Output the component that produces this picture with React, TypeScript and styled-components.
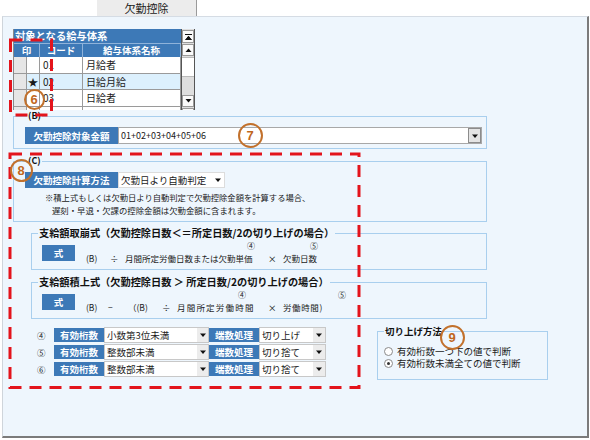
import styled, { createGlobalStyle, css } from 'styled-components'

const GlobalStyle = createGlobalStyle`
  html, body {
    margin: 0;
    padding: 0;
    background: #fff;
  }
  body {
    font-family: 'Noto Sans CJK JP', 'Noto Sans', sans-serif;
    color: #1a1a1a;
  }
`

const BLUE = '#3d79b7'
const LINE = '#a9cfee'

const Screen = styled.div`
  position: relative;
  width: 590px;
  height: 440px;
  overflow: hidden;
  background: #fff;
`

const TabBar = styled.div`
  display: flex;
  height: 16px;
  padding-left: 97px;
`

const Tab = styled.div`
  width: 100px;
  height: 16px;
  box-sizing: border-box;
  background: #ececec;
  border-right: 1px solid #9a9a9a;
  font-size: 11px;
  line-height: 16px;
  text-align: center;
`

const Panel = styled.div`
  margin-left: 2px;
  width: 587px;
  height: 422px;
  box-sizing: border-box;
  background: #eef6fd;
  border-top: 1px solid #d5dce4;
  border-left: 1px solid #cfd5db;
  border-right: 2px solid #7b7b7b;
  border-bottom: 2px solid #7b7b7b;
  padding: 12px 0 0 10px;
`

/* ---- table ---- */

const TableWrap = styled.div`
  display: flex;
  width: 182px;
  height: 81px;
  overflow: hidden;
`

const Grid = styled.div`
  width: 168px;
  box-sizing: border-box;
  border-left: 1px solid #8a8a8a;
  background: #fff;
`

const TitleRow = styled.div`
  height: 14px;
  background: ${BLUE};
  color: #fff;
  font-size: 10.3px;
  font-weight: bold;
  line-height: 14px;
  padding-left: 1px;
`

const HeadRow = styled.div`
  display: grid;
  grid-template-columns: 26px 43px 1fr;
  height: 14px;
  background: ${BLUE};
  border-top: 1px solid #8fb3da;
  box-sizing: border-box;
`

const HeadCell = styled.div`
  border-right: 1px solid #8fb3da;
  color: #fff;
  font-size: 9.5px;
  font-weight: bold;
  line-height: 13px;
  text-align: center;
`

const DataRow = styled.div<{ $selected?: boolean }>`
  display: grid;
  grid-template-columns: 13px 13px 43px 1fr;
  height: 16.5px;
  box-sizing: border-box;
  border-bottom: 1px solid #9a9a9a;
  background: ${(p) => (p.$selected ? '#dcf0fd' : '#fff')};
`

const Cell = styled.div<{ $gray?: boolean; $center?: boolean }>`
  border-right: 1px solid #9a9a9a;
  font-size: 10px;
  line-height: 15px;
  padding-left: ${(p) => (p.$center ? 0 : 3)}px;
  text-align: ${(p) => (p.$center ? 'center' : 'left')};
  background: ${(p) => (p.$gray ? '#e6e6e6' : 'transparent')};
  overflow: hidden;
  white-space: nowrap;
`

const ScrollBar = styled.div`
  width: 14px;
  box-sizing: border-box;
  display: flex;
  flex-direction: column;
  gap: 1px;
  padding-top: 1px;
  background: #dedede;
  border-left: 1px solid #555;
  border-right: 1px solid #555;
`

const ScrollBtn = styled.div<{ $h: number }>`
  height: ${(p) => p.$h}px;
  flex: none;
  box-sizing: border-box;
  background: #fafafa;
  border: 1px solid #9a9a9a;
  display: flex;
  align-items: center;
  justify-content: center;
`

const ScrollThumb = styled.div`
  height: 18px;
  flex: none;
  background: #fff;
  border-top: 1px solid #bbb;
  border-bottom: 1px solid #bbb;
`

const ScrollTrack = styled.div`
  height: 16px;
  flex: none;
`

/* ---- group boxes ---- */

const Group = styled.fieldset`
  margin: 0;
  min-width: 0;
  box-sizing: border-box;
  border: 1px solid ${LINE};
`

const Legend = styled.legend<{ $size: number; $lh: number; $ml?: number }>`
  padding: 0 1px;
  margin-left: ${(p) => p.$ml ?? 0}px;
  font-size: ${(p) => p.$size}px;
  line-height: ${(p) => p.$lh}px;
  font-weight: bold;
  color: #111;
  white-space: nowrap;
`

const Section = styled(Group)<{ $gap: number }>`
  width: 474px;
  margin-top: ${(p) => p.$gap}px;
  padding: 5px 4px 4px 11px;
`

const FieldRow = styled.div<{ $h: number }>`
  display: flex;
  height: ${(p) => p.$h}px;
`

const Label = styled.div<{ $w: number }>`
  width: ${(p) => p.$w}px;
  flex: none;
  background: ${BLUE};
  color: #fff;
  font-size: 9.5px;
  font-weight: bold;
  display: flex;
  align-items: center;
  justify-content: center;
  white-space: nowrap;
`

const InputBox = styled.div<{ $w: number; $border: string }>`
  width: ${(p) => p.$w}px;
  flex: none;
  box-sizing: border-box;
  display: flex;
  align-items: center;
  background: #fff;
  border: 1px solid ${(p) => p.$border};
`

const InputText = styled.span<{ $size: number }>`
  flex: 1;
  padding-left: 2px;
  font-size: ${(p) => p.$size}px;
  white-space: nowrap;
  overflow: hidden;
`

const DropButton = styled.div`
  width: 13px;
  height: 15px;
  box-sizing: border-box;
  background: #e4e4e4;
  border: 1px solid #8c8c8c;
  display: flex;
  align-items: center;
  justify-content: center;
`

const ArrowCell = styled.div<{ $w: number; $bg: string }>`
  width: ${(p) => p.$w}px;
  align-self: stretch;
  flex: none;
  background: ${(p) => p.$bg};
  display: flex;
  align-items: center;
  justify-content: center;
`

const Note = styled.div<{ $indent: number; $size: number }>`
  margin-left: ${(p) => p.$indent}px;
  font-size: ${(p) => p.$size}px;
  line-height: 13px;
  white-space: nowrap;
`

const Notes = styled.div`
  margin-top: 3px;
`

/* ---- formula boxes ---- */

const FormulaBox = styled(Group)<{ $gap: number }>`
  width: 456px;
  margin: ${(p) => p.$gap}px 0 0 18px;
  padding: 5px 6px 5px 6px;
`

const FormulaRow = styled.div`
  display: flex;
  height: 19px;
`

const FormulaButton = styled.div`
  align-self: flex-start;
  width: 33px;
  height: 16px;
  margin: 0 11px 0 4px;
  background: ${BLUE};
  color: #fff;
  font-size: 9.5px;
  font-weight: bold;
  display: flex;
  align-items: center;
  justify-content: center;
`

const Term = styled.span<{ $w?: number; $ls?: number }>`
  position: relative;
  align-self: flex-end;
  flex: none;
  width: ${(p) => (p.$w ? `${p.$w}px` : 'auto')};
  font-size: 8.5px;
  line-height: 12px;
  letter-spacing: ${(p) => p.$ls ?? 0}px;
  white-space: nowrap;
`

const Mark = styled.span<{ $at: number }>`
  position: absolute;
  left: ${(p) => p.$at}px;
  bottom: 100%;
  margin-bottom: 2px;
  font-size: 8px;
  line-height: 8px;
  letter-spacing: 0;
`

/* ---- bottom area ---- */

const BottomArea = styled.div`
  display: flex;
  align-items: flex-start;
  margin: 8px 0 0 23px;
`

const OptionList = styled.div`
  display: flex;
  flex-direction: column;
  gap: 1px;
`

const OptionRow = styled.div`
  display: flex;
  align-items: center;
  height: 16px;
`

const RowMark = styled.span`
  width: 17px;
  flex: none;
  padding-left: 1px;
  font-size: 8.5px;
  line-height: 16px;
`

const MethodBox = styled(Group)`
  width: 171px;
  margin: -2px 0 0 51px;
  padding: 7px 6px 10px 6px;
`

const RadioLine = styled.div`
  display: flex;
  align-items: center;
  gap: 4px;
  height: 12px;
  font-size: 9.5px;
  white-space: nowrap;
`

const RadioDot = styled.span<{ $on?: boolean }>`
  width: 9px;
  height: 9px;
  flex: none;
  box-sizing: border-box;
  border-radius: 50%;
  border: 1px solid #8a8a8a;
  background: #fff;
  display: flex;
  align-items: center;
  justify-content: center;
  ${(p) =>
    p.$on &&
    css`
      &::after {
        content: '';
        width: 3px;
        height: 3px;
        border-radius: 50%;
        background: #333;
      }
    `}
`

/* ---- annotations ---- */

const Overlay = styled.svg`
  position: absolute;
  left: 0;
  top: 0;
  pointer-events: none;
`

const Badge = styled.div<{ $x: number; $y: number; $d: number }>`
  position: absolute;
  left: ${(p) => p.$x - p.$d / 2}px;
  top: ${(p) => p.$y - p.$d / 2}px;
  width: ${(p) => p.$d}px;
  height: ${(p) => p.$d}px;
  box-sizing: border-box;
  border: 2.5px solid #c2712c;
  border-radius: 50%;
  color: #c0661c;
  font-family: 'Liberation Sans', Arial, sans-serif;
  font-size: 13px;
  font-weight: bold;
  display: flex;
  align-items: center;
  justify-content: center;
  pointer-events: none;
`

const Caret = () => (
  <svg width="6" height="4" viewBox="0 0 6 4">
    <path d="M0 0.5h6L3 4z" fill="#111" />
  </svg>
)

const ScrollIcon = ({ kind }: { kind: 'top' | 'up' | 'down' | 'bottom' }) => (
  <svg width="7" height="6" viewBox="0 0 7 6">
    {kind === 'top' && <path d="M0 0.5h7M0.5 6L3.5 2.2L6.5 6z" stroke="#111" strokeWidth="1" fill="#111" />}
    {kind === 'up' && <path d="M0.5 5L3.5 1.5L6.5 5z" fill="#111" />}
    {kind === 'down' && <path d="M0.5 1L3.5 4.5L6.5 1z" fill="#111" />}
    {kind === 'bottom' && <path d="M0 5.5h7M0.5 0L3.5 3.8L6.5 0z" stroke="#111" strokeWidth="1" fill="#111" />}
  </svg>
)

const payRows = [
  { star: '', code: '01', name: '月給者' },
  { star: '★', code: '02', name: '日給月給', selected: true },
  { star: '', code: '03', name: '日給者' },
  { star: '', code: '04', name: '時給' },
]

const options = [
  { mark: '④', digits: '小数第3位未満', rounding: '切り上げ' },
  { mark: '⑤', digits: '整数部未満', rounding: '切り捨て' },
  { mark: '⑥', digits: '整数部未満', rounding: '切り捨て' },
]

const App = () => {
  return (
    <Screen>
      <GlobalStyle />
      <TabBar>
        <Tab>欠勤控除</Tab>
      </TabBar>
      <Panel>
        <TableWrap>
          <Grid>
            <TitleRow>対象となる給与体系</TitleRow>
            <HeadRow>
              <HeadCell>印</HeadCell>
              <HeadCell>コード</HeadCell>
              <HeadCell>給与体系名称</HeadCell>
            </HeadRow>
            {payRows.map((r) => (
              <DataRow key={r.code} $selected={r.selected}>
                <Cell $gray $center />
                <Cell $center>{r.star}</Cell>
                <Cell>{r.code}</Cell>
                <Cell>{r.name}</Cell>
              </DataRow>
            ))}
          </Grid>
          <ScrollBar>
            <ScrollBtn $h={13}>
              <ScrollIcon kind="top" />
            </ScrollBtn>
            <ScrollBtn $h={12}>
              <ScrollIcon kind="up" />
            </ScrollBtn>
            <ScrollThumb />
            <ScrollTrack />
            <ScrollBtn $h={12}>
              <ScrollIcon kind="down" />
            </ScrollBtn>
            <ScrollBtn $h={12}>
              <ScrollIcon kind="bottom" />
            </ScrollBtn>
          </ScrollBar>
        </TableWrap>

        <Section $gap={0}>
          <Legend $size={9} $lh={12} $ml={2}>
            (B)
          </Legend>
          <FieldRow $h={17}>
            <Label $w={93}>欠勤控除対象金額</Label>
            <InputBox $w={364} $border="#a8a8a8">
              <InputText $size={9}>01+02+03+04+05+06</InputText>
              <DropButton>
                <Caret />
              </DropButton>
            </InputBox>
          </FieldRow>
        </Section>

        <Section $gap={6}>
          <Legend $size={9} $lh={12} $ml={2}>
            (C)
          </Legend>
          <FieldRow $h={16}>
            <Label $w={93}>欠勤控除計算方法</Label>
            <InputBox $w={107} $border="#dcdcdc">
              <InputText $size={9.5}>欠勤日より自動判定</InputText>
              <ArrowCell $w={13} $bg="#fff">
                <Caret />
              </ArrowCell>
            </InputBox>
          </FieldRow>
          <Notes>
            <Note $indent={20} $size={8.3}>
              ※積上式もしくは欠勤日より自動判定で欠勤控除金額を計算する場合、
            </Note>
            <Note $indent={27} $size={8.4}>
              遅刻・早退・欠課の控除金額は欠勤金額に含まれます。
            </Note>
          </Notes>
        </Section>

        <FormulaBox $gap={4}>
          <Legend $size={10.2} $lh={14}>
            支給額取崩式（欠勤控除日数＜＝所定日数/2の切り上げの場合）
          </Legend>
          <FormulaRow>
            <FormulaButton>式</FormulaButton>
            <Term $w={24}>(B)</Term>
            <Term $w={15}>÷</Term>
            <Term $w={143}>
              月間所定労働日数または欠勤単価
              <Mark $at={122}>④</Mark>
            </Term>
            <Term $w={15}>×</Term>
            <Term>
              欠勤日数
              <Mark $at={27}>⑤</Mark>
            </Term>
          </FormulaRow>
        </FormulaBox>

        <FormulaBox $gap={5}>
          <Legend $size={10.2} $lh={14}>
            支給額積上式（欠勤控除日数 ＞ 所定日数/2の切り上げの場合）
          </Legend>
          <FormulaRow>
            <FormulaButton>式</FormulaButton>
            <Term $w={22}>(B)</Term>
            <Term $w={20}>−</Term>
            <Term $w={34}>（(B)</Term>
            <Term $w={15}>÷</Term>
            <Term $w={91} $ls={1.2}>
              月間所定労働時間
              <Mark $at={61}>④</Mark>
            </Term>
            <Term $w={15}>×</Term>
            <Term $ls={0.6}>
              労働時間)
              <Mark $at={55}>⑤</Mark>
            </Term>
          </FormulaRow>
        </FormulaBox>

        <BottomArea>
          <OptionList>
            {options.map((o) => (
              <OptionRow key={o.mark}>
                <RowMark>{o.mark}</RowMark>
                <Label $w={50}>有効桁数</Label>
                <InputBox $w={105} $border="#c8c8c8">
                  <InputText $size={9.5}>{o.digits}</InputText>
                  <ArrowCell $w={11} $bg="#ececec">
                    <Caret />
                  </ArrowCell>
                </InputBox>
                <Label $w={50}>端数処理</Label>
                <InputBox $w={67} $border="#c8c8c8">
                  <InputText $size={9.5}>{o.rounding}</InputText>
                  <ArrowCell $w={12} $bg="#ececec">
                    <Caret />
                  </ArrowCell>
                </InputBox>
              </OptionRow>
            ))}
          </OptionList>

          <MethodBox>
            <Legend $size={9.5} $lh={13}>
              切り上げ方法
            </Legend>
            <RadioLine>
              <RadioDot />
              有効桁数一つ下の値で判断
            </RadioLine>
            <RadioLine>
              <RadioDot $on />
              有効桁数未満全ての値で判断
            </RadioLine>
          </MethodBox>
        </BottomArea>
      </Panel>

      <Overlay width={590} height={440}>
        <rect x={10.5} y={40} width={41} height={75} fill="none" stroke="#e3141c" strokeWidth={3} strokeDasharray="12 8" />
        <rect x={10} y={154} width={349} height={233.5} fill="none" stroke="#e3141c" strokeWidth={3} strokeDasharray="12 8" />
      </Overlay>
      <Badge $x={34} $y={99} $d={21}>6</Badge>
      <Badge $x={250} $y={135} $d={25}>7</Badge>
      <Badge $x={21} $y={170} $d={23}>8</Badge>
      <Badge $x={452} $y={337} $d={25}>9</Badge>
    </Screen>
  )
}

export default App
